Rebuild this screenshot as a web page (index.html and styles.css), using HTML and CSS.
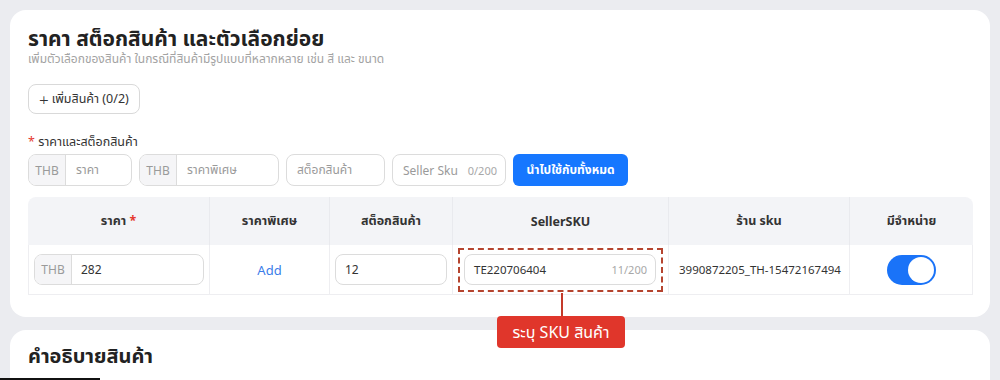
FILE: index.html
```html
<!DOCTYPE html>
<html>
<head>
    <title>ราคา สต็อกสินค้า และตัวเลือกย่อย</title>
    <link rel="stylesheet" href="styles.css">
</head>
<body>
    <div class="page">
        <div class="card">
            <h2 class="card-title">ราคา สต็อกสินค้า และตัวเลือกย่อย</h2>
            <div class="card-sub">เพิ่มตัวเลือกของสินค้า ในกรณีที่สินค้ามีรูปแบบที่หลากหลาย เช่น สี และ ขนาด</div>

            <button class="btn-add"><span class="plus">+</span> เพิ่มสินค้า (0/2)</button>

            <div class="field-label"><span class="req">*</span> ราคาและสต็อกสินค้า</div>
            <div class="bulk-row">
                <div class="input-group w-price">
                    <span class="addon">THB</span>
                    <span class="ph">ราคา</span>
                </div>
                <div class="input-group w-special">
                    <span class="addon">THB</span>
                    <span class="ph">ราคาพิเศษ</span>
                </div>
                <div class="input-group w-stock">
                    <span class="ph">สต็อกสินค้า</span>
                </div>
                <div class="input-group w-sku">
                    <span class="ph">Seller Sku</span>
                    <span class="count">0/200</span>
                </div>
                <button class="btn-primary">นำไปใช้กับทั้งหมด</button>
            </div>

            <table class="sku-table">
                <thead>
                    <tr>
                        <th class="c-price">ราคา <span class="req">*</span></th>
                        <th class="c-special">ราคาพิเศษ</th>
                        <th class="c-stock">สต็อกสินค้า</th>
                        <th class="c-sku">SellerSKU</th>
                        <th class="c-shop">ร้าน sku</th>
                        <th class="c-avail">มีจำหน่าย</th>
                    </tr>
                </thead>
                <tbody>
                    <tr>
                        <td>
                            <div class="input-group">
                                <span class="addon">THB</span>
                                <span class="val">282</span>
                            </div>
                        </td>
                        <td class="center"><a class="link">Add</a></td>
                        <td>
                            <div class="input-group"><span class="val">12</span></div>
                        </td>
                        <td class="sku-cell">
                            <div class="input-group">
                                <span class="val">TE220706404</span>
                                <span class="count">11/200</span>
                            </div>
                            <div class="highlight"></div>
                            <div class="callout-line"></div>
                            <div class="callout">ระบุ SKU สินค้า</div>
                        </td>
                        <td class="shop-sku">3990872205_TH-15472167494</td>
                        <td class="center">
                            <span class="switch"><span class="knob"></span></span>
                        </td>
                    </tr>
                </tbody>
            </table>
        </div>

        <div class="card card-next">
            <h2 class="card-title">คำอธิบายสินค้า</h2>
        </div>
    </div>
    <div class="edge-bar"></div>
</body>
</html>
```

FILE: styles.css
```css
body {
    margin: 0;
    background-color: #ebecf0;
    font-family: "Noto Sans", "Noto Sans Thai", "Liberation Sans", sans-serif;
    color: #333;
    overflow: hidden;
}

.page {
    padding: 10px;
}

.card {
    background: white;
    border-radius: 16px;
    padding: 16px 17px 22px 18px;
    position: relative;
}

.card-next {
    margin-top: 13px;
    z-index: 0;
    padding-top: 13px;
    height: 60px;
}

.card-title {
    font-size: 21px;
    font-weight: bold;
    margin: 0;
    line-height: 24px;
    color: #222;
}

.card-next .card-title {
    font-size: 20px;
    line-height: 26px;
}

.card-sub {
    margin-top: 2px;
    font-size: 12px;
    color: #a3a3a3;
    line-height: 14px;
}

.btn-add {
    margin-top: 18px;
    height: 30px;
    padding: 0 10px;
    background: white;
    border: 1px solid #d9d9d9;
    border-radius: 8px;
    font-family: inherit;
    font-size: 12.5px;
    color: #333;
    display: flex;
    align-items: center;
    gap: 3px;
}

.plus {
    font-size: 17px;
    font-weight: 300;
    line-height: 1;
}

.field-label {
    margin-top: 20px;
    font-size: 12.5px;
    line-height: 16px;
    color: #333;
}

.req {
    color: #e5392f;
}

.bulk-row {
    display: flex;
    gap: 7px;
    margin-top: 4px;
    height: 32px;
}

.input-group {
    display: flex;
    align-items: center;
    height: 31px;
    border: 1px solid #dcdcdc;
    border-radius: 8px;
    box-sizing: border-box;
    font-size: 12px;
    overflow: hidden;
    background: white;
}

.bulk-row .input-group {
    height: 32px;
}

.addon {
    background: #f5f5f7;
    color: #9a9a9a;
    height: 100%;
    width: 36px;
    display: flex;
    align-items: center;
    justify-content: center;
    border-right: 1px solid #dcdcdc;
    flex-shrink: 0;
}

.ph {
    color: #9a9a9a;
    padding-left: 10px;
    flex: 1;
}

.val {
    color: #333;
    padding-left: 9px;
    flex: 1;
}

.count {
    color: #a8a8a8;
    font-size: 11px;
    padding-right: 8px;
}

.w-price { width: 104px; }
.w-special { width: 140px; }
.w-stock { width: 99px; }
.w-sku { width: 114px; }

.btn-primary {
    height: 32px;
    width: 115px;
    border: none;
    border-radius: 6px;
    background-color: #1677ff;
    color: white;
    font-family: inherit;
    font-size: 12px;
    font-weight: bold;
    padding: 0;
}

.sku-table {
    margin-top: 11px;
    width: 945px;
    border-collapse: separate;
    border-spacing: 0;
    table-layout: fixed;
    font-size: 12px;
}

.sku-table th {
    background: #f3f4f7;
    height: 48px;
    font-weight: bold;
    font-size: 12.5px;
    color: #333;
    border-right: 1px solid #e9eaee;
    padding: 0;
}

.sku-table th:first-child { border-top-left-radius: 8px; }
.sku-table th:last-child { border-top-right-radius: 8px; border-right: none; }

.sku-table td {
    height: 49px;
    border-bottom: 1px solid #eeeef1;
    border-right: 1px solid #eeeef1;
    padding: 0 5px;
}

.sku-table td:first-child { border-left: 1px solid #eeeef1; }
.sku-table td:last-child { border-right: 1px solid #eeeef1; }

.c-price { width: 181px; }
.c-special { width: 119px; }
.c-stock { width: 122px; }
.c-sku { width: 215px; }
.c-shop { width: 180px; }

.center {
    text-align: center;
}

.link {
    color: #3b7de9;
    font-size: 13px;
}

.sku-cell {
    position: relative;
}

.sku-cell .input-group {
    margin: 0 7px 0 6px;
}

.sku-cell .val {
    font-size: 11.5px;
}

.highlight {
    position: absolute;
    left: 5px;
    right: 5px;
    top: 3px;
    bottom: 2px;
    border: 2px dashed #b5442f;
    pointer-events: none;
}

.callout-line {
    position: absolute;
    left: 108px;
    top: 48px;
    width: 2px;
    height: 24px;
    background: #c43a2a;
}

.callout {
    position: absolute;
    left: 44px;
    top: 71px;
    width: 128px;
    height: 32px;
    line-height: 32px;
    text-align: center;
    background: #e0362b;
    color: white;
    font-size: 16px;
    border-radius: 4px;
    z-index: 5;
}

.shop-sku {
    color: #333;
    font-size: 11.5px;
    white-space: nowrap;
    padding-left: 10px !important;
}

.switch {
    display: inline-block;
    width: 49px;
    height: 30px;
    border-radius: 15px;
    background: #1a73f8;
    position: relative;
    vertical-align: middle;
}

.knob {
    position: absolute;
    right: 2px;
    top: 2px;
    width: 26px;
    height: 26px;
    border-radius: 50%;
    background: white;
}

.edge-bar {
    position: fixed;
    left: 0;
    bottom: 0;
    width: 100px;
    height: 2px;
    background: #111;
}
```
